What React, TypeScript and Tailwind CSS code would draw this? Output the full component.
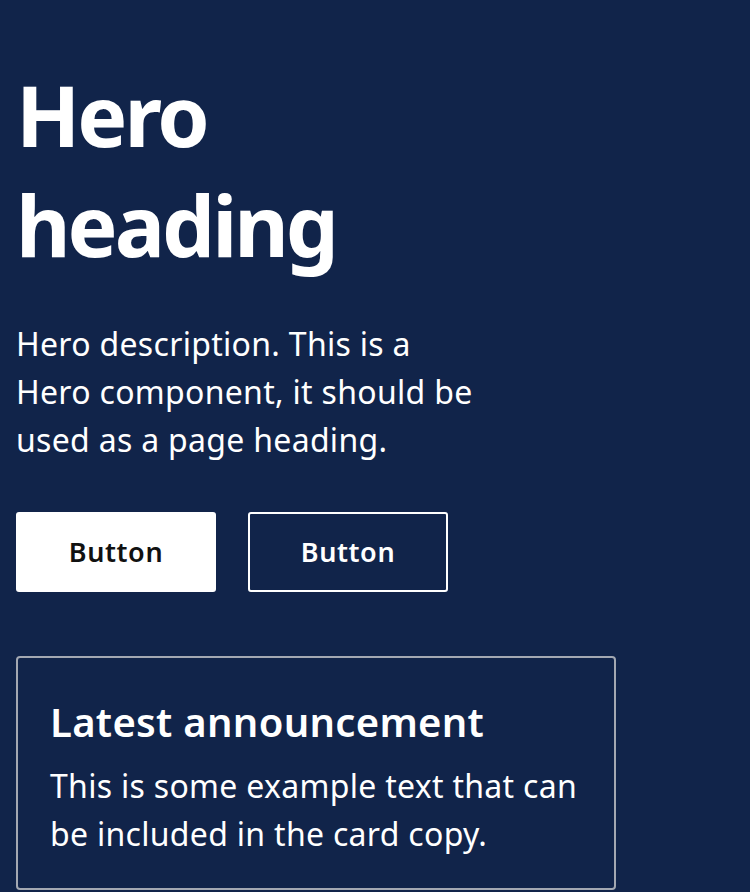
export default function App() {
  return (
    <div
      className="min-h-[892px] w-full bg-[#11244a] px-4 pt-[60px] text-white"
      style={{ fontFamily: '"Noto Sans", "Open Sans", sans-serif' }}
    >
      <h1 className="text-[84px] font-bold leading-[110px] tracking-[-3px]">
        Hero
        <br />
        heading
      </h1>
      <p className="mt-10 max-w-[464px] text-[32px] leading-[48px] tracking-[0.3px]">
        Hero description. This is a Hero component, it should be used as a page heading.
      </p>

      <div className="mt-12 flex gap-8">
        <button
          type="button"
          className="h-20 w-[200px] rounded-[3px] bg-white text-[27px] font-semibold tracking-[0.6px] text-[#111]"
        >
          Button
        </button>
        <button
          type="button"
          className="h-20 w-[200px] rounded-[3px] border-2 border-white text-[27px] font-semibold tracking-[0.6px] text-white"
        >
          Button
        </button>
      </div>

      {/* Card */}
      <div className="mt-16 w-[600px] rounded-[4px] border-2 border-[#a3a8b2] px-8 pb-[30px] pt-10">
        <h2 className="text-[40px] font-semibold leading-[48px] tracking-[0.3px]">Latest announcement</h2>
        <p className="mt-4 text-[32px] leading-[48px] tracking-[0.3px]">
          This is some example text that can be included in the card copy.
        </p>
      </div>
    </div>
  )
}
